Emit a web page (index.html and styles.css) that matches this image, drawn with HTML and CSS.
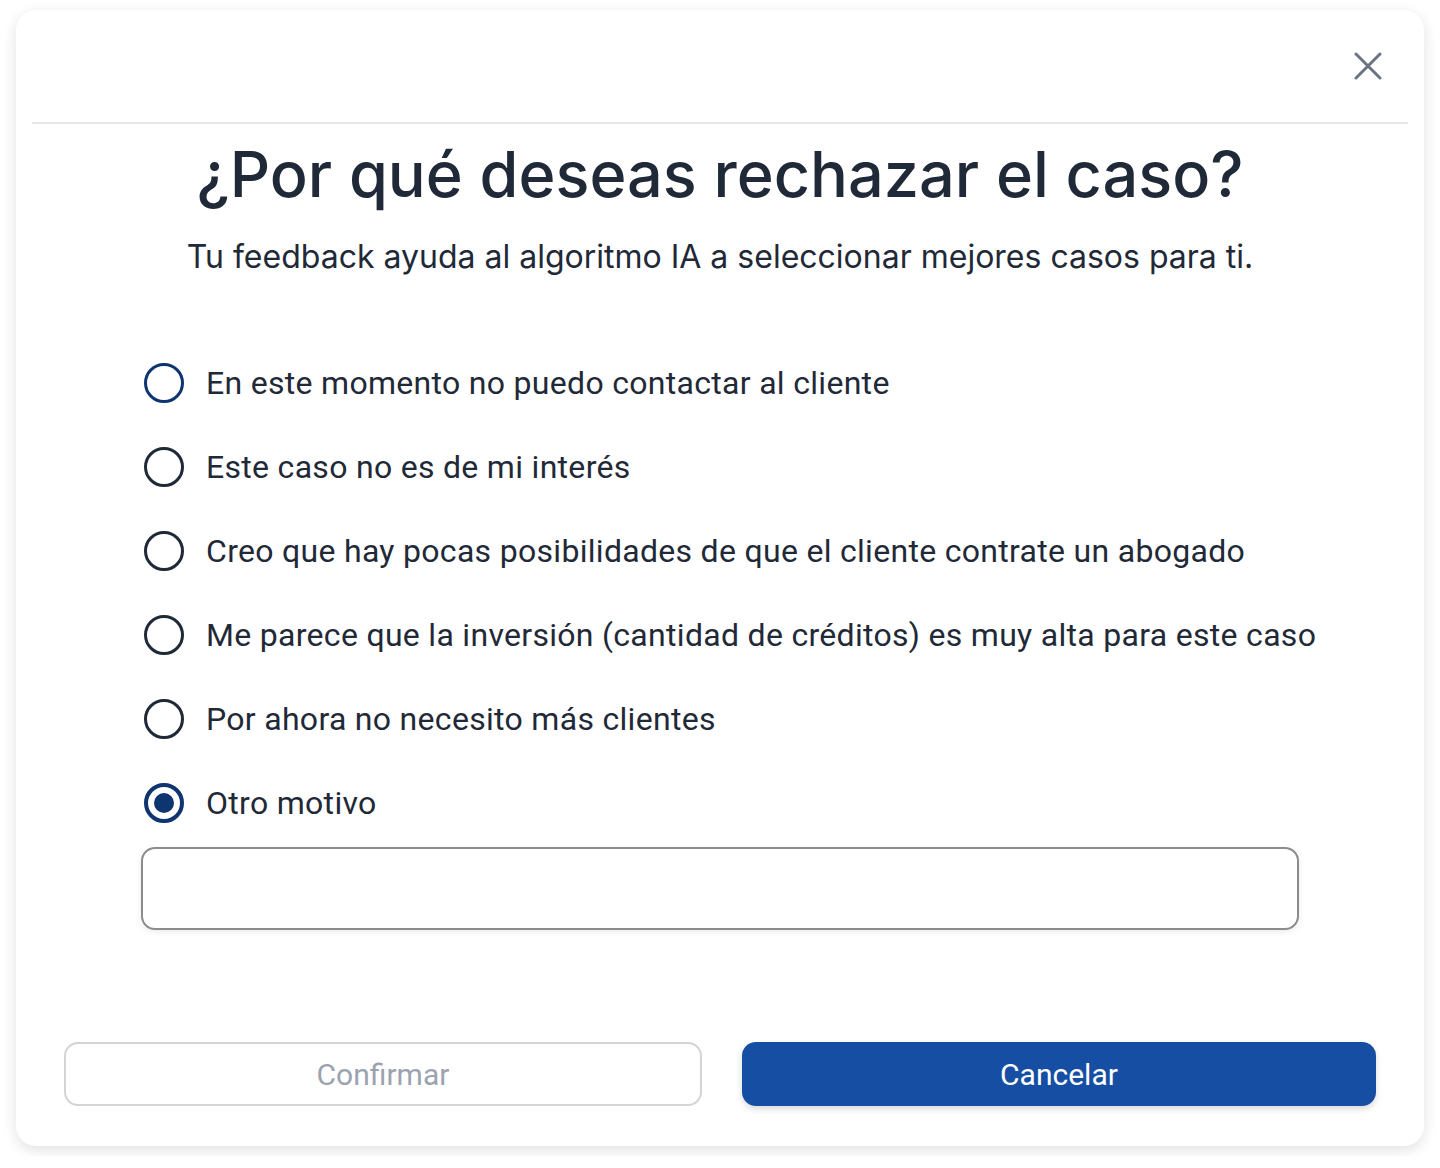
FILE: index.html
```html
<!DOCTYPE html>
<html lang="es">
<head>
    <meta charset="UTF-8">
    <meta name="viewport" content="width=device-width, initial-scale=1.0">
    <title>Rechazar caso</title>
    <link rel="stylesheet" href="styles.css">
</head>
<body>
    <div class="modal">
        <div class="modal-header">
            <button class="close-btn" type="button" aria-label="Cerrar">
                <svg width="28" height="28" viewBox="0 0 28 28" fill="none" stroke="#6b7280" stroke-width="3" stroke-linecap="round">
                    <path d="M2 2 L26 26 M26 2 L2 26"/>
                </svg>
            </button>
        </div>
        <div class="divider"></div>

        <h1 class="title">¿Por qué deseas rechazar el caso?</h1>
        <p class="subtitle">Tu feedback ayuda al algoritmo IA a seleccionar mejores casos para ti.</p>

        <form class="reasons">
            <label class="option">
                <span class="radio focus"></span>
                <span class="option-text">En este momento no puedo contactar al cliente</span>
            </label>
            <label class="option">
                <span class="radio"></span>
                <span class="option-text">Este caso no es de mi interés</span>
            </label>
            <label class="option">
                <span class="radio"></span>
                <span class="option-text">Creo que hay pocas posibilidades de que el cliente contrate un abogado</span>
            </label>
            <label class="option">
                <span class="radio"></span>
                <span class="option-text">Me parece que la inversión (cantidad de créditos) es muy alta para este caso</span>
            </label>
            <label class="option">
                <span class="radio"></span>
                <span class="option-text">Por ahora no necesito más clientes</span>
            </label>
            <label class="option">
                <span class="radio checked"></span>
                <span class="option-text">Otro motivo</span>
            </label>
            <input type="text" class="other-input">
        </form>

        <div class="actions">
            <button type="button" class="btn btn-outline">Confirmar</button>
            <button type="button" class="btn btn-primary">Cancelar</button>
        </div>
    </div>
</body>
</html>
```

FILE: styles.css
```css
body {
    margin: 0;
    background-color: #ffffff;
    font-family: Roboto, "Liberation Sans", sans-serif;
    color: #1f2937;
}

.modal {
    box-sizing: border-box;
    width: 1408px;
    height: 1136px;
    margin: 10px 16px;
    background-color: #ffffff;
    border-radius: 20px;
    box-shadow: 0 4px 14px rgba(0, 0, 0, 0.12);
    display: flex;
    flex-direction: column;
}

.modal-header {
    height: 112px;
    display: flex;
    justify-content: flex-end;
    align-items: center;
    padding-right: 42px;
}

.close-btn {
    background: none;
    border: none;
    padding: 0;
    width: 28px;
    height: 28px;
    cursor: pointer;
}

.close-btn svg {
    display: block;
}

.divider {
    height: 2px;
    margin: 0 16px;
    background-color: #e5e7eb;
}

.title {
    margin: 12px 0 0;
    font-family: Inter, "DejaVu Sans", sans-serif;
    font-weight: 500;
    font-size: 63px;
    line-height: 76px;
    text-align: center;
    color: #1f2937;
}

.subtitle {
    margin: 23px 0 0;
    font-family: Inter, "DejaVu Sans", sans-serif;
    font-size: 32px;
    line-height: 44px;
    text-align: center;
    color: #1f2937;
}

.reasons {
    display: flex;
    flex-direction: column;
    margin: 62px 0 0 125px;
}

.option {
    display: flex;
    align-items: center;
    height: 84px;
    cursor: pointer;
}

.radio {
    box-sizing: border-box;
    width: 40px;
    height: 40px;
    margin-left: 3px;
    border: 3px solid #1f2937;
    border-radius: 50%;
    flex-shrink: 0;
    position: relative;
}

.radio.focus {
    border-color: #0f3571;
}

.radio.checked {
    border: 4px solid #0f3571;
}

.radio.checked::after {
    content: "";
    position: absolute;
    top: 6px;
    left: 6px;
    width: 20px;
    height: 20px;
    border-radius: 50%;
    background-color: #0f3571;
}

.option-text {
    margin-left: 22px;
    font-size: 32px;
    letter-spacing: 0.3px;
    color: #1f2937;
}

.other-input {
    box-sizing: border-box;
    width: 1158px;
    height: 83px;
    margin-top: 2px;
    border: 2px solid #8c8c8c;
    border-radius: 14px;
    box-shadow: 0 2px 6px rgba(0, 0, 0, 0.08);
    font-size: 28px;
    font-family: Roboto, sans-serif;
    padding: 0 20px;
    outline: none;
}

.actions {
    margin-top: auto;
    padding: 0 48px 40px;
    display: flex;
    gap: 40px;
}

.btn {
    flex: 1;
    height: 64px;
    border-radius: 14px;
    font-family: Roboto, "Liberation Sans", sans-serif;
    font-size: 30px;
    cursor: pointer;
}

.btn-outline {
    background-color: #ffffff;
    border: 2px solid #d4d4d4;
    color: #9ca3af;
}

.btn-primary {
    background-color: #164ea4;
    border: none;
    color: #ffffff;
    box-shadow: 0 3px 6px rgba(0, 0, 0, 0.15);
}
```
